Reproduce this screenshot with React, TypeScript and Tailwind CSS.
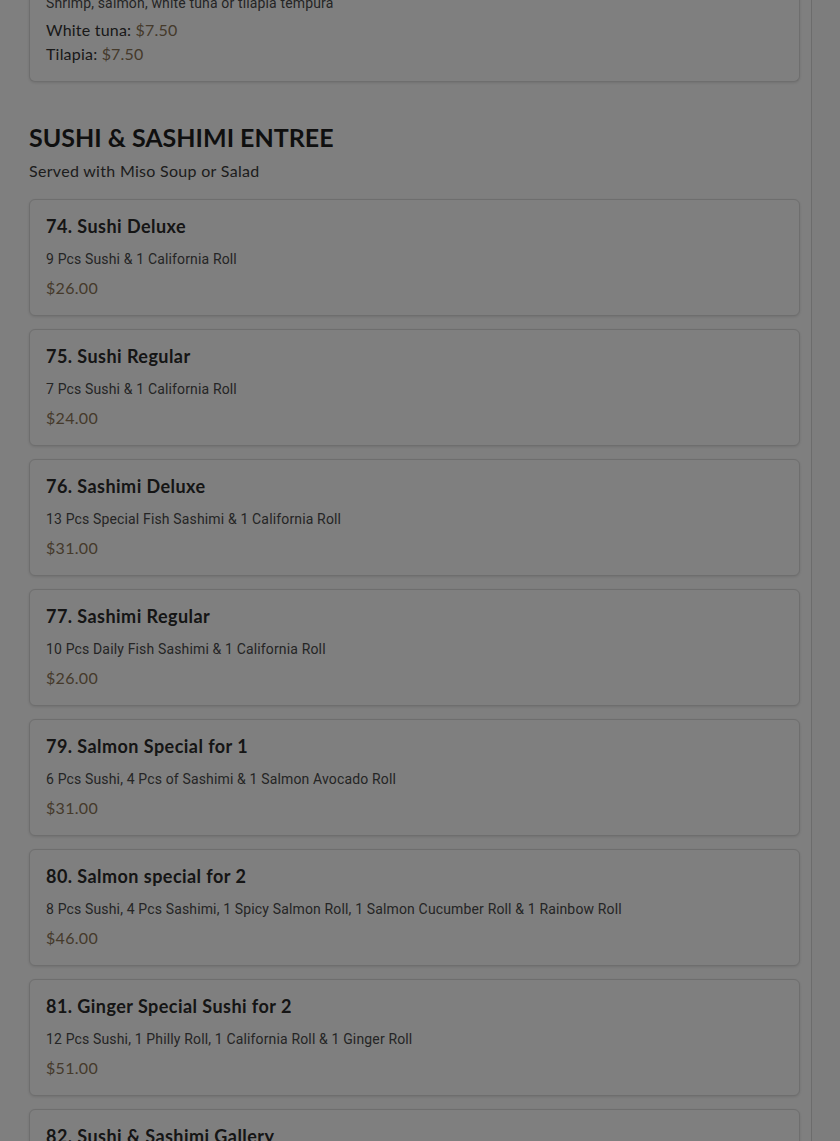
import type { FC } from 'react';

type Item = { name: string; desc: string; price: string };

const items: Item[] = [
  { name: '74. Sushi Deluxe', desc: '9 Pcs Sushi & 1 California Roll', price: '$26.00' },
  { name: '75. Sushi Regular', desc: '7 Pcs Sushi & 1 California Roll', price: '$24.00' },
  { name: '76. Sashimi Deluxe', desc: '13 Pcs Special Fish Sashimi & 1 California Roll', price: '$31.00' },
  { name: '77. Sashimi Regular', desc: '10 Pcs Daily Fish Sashimi & 1 California Roll', price: '$26.00' },
  { name: '79. Salmon Special for 1', desc: '6 Pcs Sushi, 4 Pcs of Sashimi & 1 Salmon Avocado Roll', price: '$31.00' },
  {
    name: '80. Salmon special for 2',
    desc: '8 Pcs Sushi, 4 Pcs Sashimi, 1 Spicy Salmon Roll, 1 Salmon Cucumber Roll & 1 Rainbow Roll',
    price: '$46.00',
  },
  { name: '81. Ginger Special Sushi for 2', desc: '12 Pcs Sushi, 1 Philly Roll, 1 California Roll & 1 Ginger Roll', price: '$51.00' },
  { name: '82. Sushi & Sashimi Gallery', desc: '', price: '' },
];

const MenuCard: FC<{ item: Item }> = ({ item }) => (
  <div className="rounded-[6px] border border-[#dcdcdc] bg-white px-4 pt-4 pb-[15px] shadow-[0_1px_3px_rgba(0,0,0,0.12)]">
    <p className="text-[18px] leading-[21px] font-bold tracking-[0.45px] text-[#2a2a2a]">{item.name}</p>
    <p className="mt-[12px] text-[14px] leading-[20px] tracking-[0.15px] text-[#4a4a4a] font-['Roboto',sans-serif]">
      {item.desc}
    </p>
    <p className="mt-[7px] text-[16px] leading-[24px] tracking-[0.3px] text-[#8a7456]">{item.price}</p>
  </div>
);

export default function App() {
  return (
    <div className="relative h-[1141px] overflow-hidden bg-white font-['Lato','Noto_Sans',sans-serif]">
      <div className="flex">
        <div className="w-[812px] border-r border-[#d8d8d8] pl-[29px] pr-[11px]">
          <div className="-mt-[7px] rounded-b-[6px] border border-t-0 border-[#dcdcdc] bg-white px-4 pb-[15px] shadow-[0_1px_3px_rgba(0,0,0,0.12)]">
            <p className="text-[14px] leading-[20px] tracking-[0.15px] text-[#4a4a4a] font-['Roboto',sans-serif]">
              Shrimp, salmon, white tuna or tilapia tempura
            </p>
            <p className="mt-[5px] text-[16px] leading-[24px] tracking-[0.2px] text-[#333333]">
              White tuna: <span className="text-[#8a7456]">$7.50</span>
            </p>
            <p className="text-[16px] leading-[24px] tracking-[0.2px] text-[#333333]">
              Tilapia: <span className="text-[#8a7456]">$7.50</span>
            </p>
          </div>

          <h2 className="mt-[39px] text-[25px] leading-[32px] font-bold text-[#1e1e1e]">
            SUSHI &amp; SASHIMI ENTREE
          </h2>
          <p className="mt-[6px] text-[16px] leading-[24px] tracking-[0.3px] text-[#3a3a3a]">
            Served with Miso Soup or Salad
          </p>

          <div className="mt-4 flex flex-col gap-[13px]">
            {items.map((item) => (
              <MenuCard key={item.name} item={item} />
            ))}
          </div>
        </div>
        <div className="flex-1 bg-[#fafafa]" />
      </div>
      <div className="fixed inset-0 bg-black/50" />
    </div>
  );
}
